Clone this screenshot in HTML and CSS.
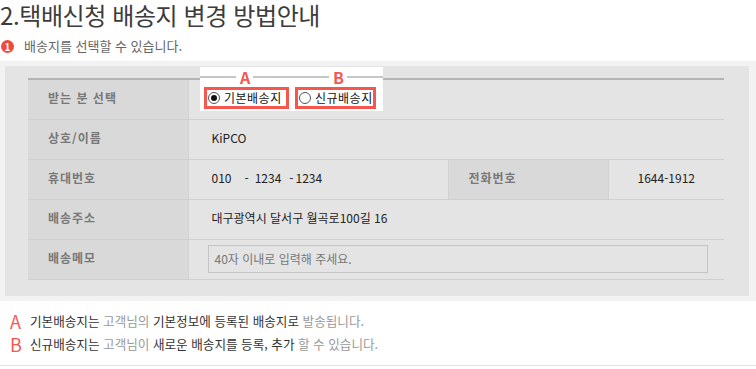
FILE: index.html
```html
<!DOCTYPE html>
<html lang="ko">
<head>
  <meta charset="UTF-8">
  <title>택배신청 배송지 변경 방법안내</title>
  <link rel="stylesheet" href="styles.css">
</head>
<body>
  <h1 class="title">2.택배신청 배송지 변경 방법안내</h1>

  <p class="sub"><span class="num">1</span>배송지를 선택할 수 있습니다.</p>

  <div class="panel">
    <div class="panel-inner">
      <div class="form-wrap">
        <table class="form">
          <colgroup>
            <col style="width:160px">
            <col style="width:260px">
            <col style="width:160px">
            <col style="width:116px">
          </colgroup>
          <tr>
            <th>받는 분 선택</th>
            <td colspan="3"></td>
          </tr>
          <tr>
            <th>상호/이름</th>
            <td colspan="3">KiPCO</td>
          </tr>
          <tr>
            <th>휴대번호</th>
            <td>010<span class="dash">-</span>1234<span class="dash dash2">-</span>1234</td>
            <th>전화번호</th>
            <td class="center">1644-1912</td>
          </tr>
          <tr>
            <th>배송주소</th>
            <td colspan="3">대구광역시 달서구 월곡로100길 16</td>
          </tr>
          <tr>
            <th>배송메모</th>
            <td colspan="3" class="memo-cell"><div class="memo">40자 이내로 입력해 주세요.</div></td>
          </tr>
        </table>

        <!-- A / B 안내 -->
        <div class="pick">
          <div class="opt opt-a">
            <div class="mark"><span class="ln"></span><b>A</b><span class="ln"></span></div>
            <div class="box"><span class="radio on"></span>기본배송지</div>
          </div>
          <div class="opt opt-b">
            <div class="mark"><span class="ln"></span><b>B</b><span class="ln"></span></div>
            <div class="box"><span class="radio"></span>신규배송지</div>
          </div>
        </div>
      </div>
    </div>
  </div>

  <div class="notes">
    <p><span class="ab">A</span><em>기본배송지는</em> 고객님의 <em>기본정보에 등록된 배송지로</em> 발송됩니다.</p>
    <p><span class="ab">B</span><em>신규배송지는</em> 고객님이 <em>새로운 배송지를 등록, 추가</em> 할 수 있습니다.</p>
  </div>
</body>
</html>
```

FILE: styles.css
```css
body {
  margin: 0;
  font-family: "Noto Sans CJK KR", "Noto Sans", sans-serif;
  background: #fff;
  color: #222;
}

.title {
  margin: 0;
  font-size: 24px;
  line-height: 30px;
  font-weight: normal;
  color: #3c3c3c;
  letter-spacing: -0.4px;
}

.sub {
  display: flex;
  align-items: center;
  margin: 9px 0 0 1px;
  height: 14px;
  font-size: 13px;
  line-height: 14px;
  color: #666;
}

.num {
  width: 13px;
  height: 13px;
  margin-right: 10px;
  border-radius: 50%;
  background: #f04a3c;
  color: #fff;
  font-size: 10px;
  font-weight: bold;
  line-height: 13px;
  text-align: center;
}

.panel {
  margin-top: 8px;
  padding: 5px 7px 5px 5px;
  background: #f2f2f2;
}

.panel-inner {
  background: #e4e4e4;
  padding: 12px 25px 16px 23px;
}

.form-wrap {
  position: relative;
}

.form {
  width: 696px;
  border-collapse: collapse;
  table-layout: fixed;
  border-top: 2px solid #b4b4b4;
  font-size: 12px;
  line-height: 16px;
}

.form th,
.form td {
  box-sizing: border-box;
  height: 40px;
  padding: 0 0 3px;
  border-bottom: 1px solid #cfcfcf;
  vertical-align: middle;
}

.form th {
  background: #d9d9d9;
  border-right: 1px solid #d2d2d2;
  border-left: 1px solid #d2d2d2;
  color: #777;
  font-weight: bold;
  text-align: left;
  padding-left: 20px;
  letter-spacing: 1px;
}

.form tr th:first-child {
  border-left: 0;
}

.form td {
  padding-left: 23px;
  color: #222;
}

.form td.center {
  text-align: center;
  padding-left: 0;
}

.dash {
  margin: 0 6px 0 13px;
}

.dash2 {
  margin: 0 2px 0 8px;
}

.form td.memo-cell {
  padding: 0 16px 0 19px;
}

.memo {
  height: 26px;
  border: 1px solid #c4c4c4;
  padding-left: 6px;
  line-height: 26px;
  color: #777;
}

/* A / B 표시 */
.pick {
  position: absolute;
  left: 172px;
  top: -11px;
  width: 183px;
  height: 44px;
  background: #fff;
  display: flex;
}

.opt {
  width: 91.5px;
}

.mark {
  display: flex;
  align-items: center;
  height: 18px;
  margin-top: 1px;
}

.mark .ln {
  flex: 1;
  height: 2px;
  background: #c6c6c6;
}

.mark b {
  padding: 0 3px 0 4px;
  color: #f5574f;
  font-size: 16px;
  line-height: 18px;
}

.opt-a .mark .ln:first-child {
  flex: 0 0 36px;
}

.opt-b .mark .ln:last-child {
  flex: 0 0 36px;
}

.box {
  display: flex;
  align-items: center;
  height: 16px;
  margin-top: 1px;
  border: 3px solid #f5574f;
  font-size: 12px;
  line-height: 16px;
  letter-spacing: 0.5px;
  white-space: nowrap;
  color: #111;
}

.opt-a .box {
  margin-left: 4px;
  width: 79px;
}

.opt-b .box {
  margin-left: 3.5px;
  width: 75px;
}

.radio {
  position: relative;
  flex: none;
  width: 10px;
  height: 10px;
  margin: 0 4px 0 1px;
  border: 1px solid #555;
  border-radius: 50%;
  background: #fff;
}

.radio.on::after {
  content: "";
  position: absolute;
  left: 2px;
  top: 2px;
  width: 6px;
  height: 6px;
  border-radius: 50%;
  background: #111;
}

.notes {
  padding: 9px 0 9px 10px;
  border-bottom: 1px solid #e2e2e2;
}

.notes p {
  margin: 0;
  height: 23px;
  display: flex;
  align-items: center;
  font-size: 12.6px;
  line-height: 18px;
  color: #999;
  white-space: pre;
}

.notes em {
  font-style: normal;
  color: #333;
}

.ab {
  width: 20px;
  color: #f5574f;
  font-size: 18px;
  line-height: 20px;
}
```
